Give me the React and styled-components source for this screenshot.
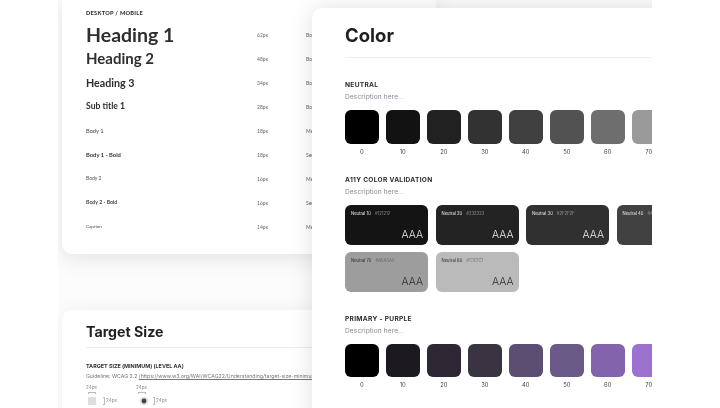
import React from "react";
import styled, { createGlobalStyle } from "styled-components";

const typeRows = [
  { name: "Heading 1", size: "62px", weight: "Bold", font: 19.5, w: 600, color: "#2e2e2e" },
  { name: "Heading 2", size: "48px", weight: "Bold", font: 15, w: 600, color: "#2e2e2e" },
  { name: "Heading 3", size: "34px", weight: "Bold", font: 10.7, w: 600, color: "#2e2e2e" },
  { name: "Sub title 1", size: "28px", weight: "Bold", font: 8.6, w: 600, color: "#2e2e2e" },
  { name: "Body 1", size: "18px", weight: "Medium", font: 5.7, w: 400, color: "#444" },
  { name: "Body 1 - Bold", size: "18px", weight: "Semibold", font: 5.8, w: 600, color: "#333" },
  { name: "Body 2", size: "16px", weight: "Medium", font: 5, w: 400, color: "#555" },
  { name: "Body 2 - Bold", size: "16px", weight: "Semibold", font: 5.2, w: 600, color: "#444" },
  { name: "Caption", size: "14px", weight: "Medium", font: 4.6, w: 400, color: "#555" },
];

const neutral = ["#000000", "#121212", "#212121", "#323232", "#404040", "#525252", "#6e6e6e", "#9a9a9a"];
const purple = ["#000000", "#1c1a20", "#2c2733", "#3a3342", "#5c4d72", "#6a5a88", "#8363ac", "#9b72d0"];
const steps = [0, 10, 20, 30, 40, 50, 60, 70];

const validation = [
  { name: "Neutral 10", hex: "#121212", bg: "#141414", light: true },
  { name: "Neutral 20", hex: "#232323", bg: "#232323", light: true },
  { name: "Neutral 30", hex: "#2F2F2F", bg: "#303030", light: true },
  { name: "Neutral 40", hex: "#404040", bg: "#414141", light: true },
  { name: "Neutral 70", hex: "#A5A5A5", bg: "#9d9d9d", light: false },
  { name: "Neutral 80", hex: "#C1C1C1", bg: "#bababa", light: false },
];

const App = () => {
  return (
    <Canvas>
      <GlobalStyle />
      <LeftColumn>
        <TypeCard>
          <TinyLabel>DESKTOP / MOBILE</TinyLabel>
          {typeRows.map((r) => (
            <TypeRow key={r.name}>
              <TypeName $size={r.font} $weight={r.w} $color={r.color}>{r.name}</TypeName>
              <TypeMeta>{r.size}</TypeMeta>
              <TypeMeta>{r.weight}</TypeMeta>
            </TypeRow>
          ))}
        </TypeCard>
        <TargetCard>
          <TargetTitle>Target Size</TargetTitle>
          <TargetHeading>TARGET SIZE (MINIMUM) (LEVEL AA)</TargetHeading>
          <Guideline>
            Guideline: WCAG 2.2 <u>(https://www.w3.org/WAI/WCAG22/Understanding/target-size-minimum.html)</u>
          </Guideline>
          <TargetDemos>
            <TargetDemo>
              <DimLabel>24px</DimLabel>
              <DimBar />
              <DemoRow $inset={2} $gap={6}>
                <GraySquare />
                <DimSide />
                <DimLabel>24px</DimLabel>
              </DemoRow>
            </TargetDemo>
            <TargetDemo>
              <DimLabel>24px</DimLabel>
              <DimBar />
              <DemoRow $inset={4} $gap={4}>
                <TargetDot width="8" height="8" viewBox="0 0 8 8">
                  <circle cx="4" cy="4" r="4" fill="#dcdcdc" />
                  <circle cx="4" cy="4" r="2.4" fill="#444" />
                </TargetDot>
                <DimSide />
                <DimLabel>24px</DimLabel>
              </DemoRow>
            </TargetDemo>
          </TargetDemos>
        </TargetCard>
      </LeftColumn>

      <ColorCard>
        <ColorTitle>Color</ColorTitle>

        <SectionTitle>NEUTRAL</SectionTitle>
        <Description>Description here...</Description>
        <SwatchRow>
          {neutral.map((c, i) => (
            <SwatchItem key={c}>
              <Swatch $bg={c} />
              <SwatchLabel>{steps[i]}</SwatchLabel>
            </SwatchItem>
          ))}
        </SwatchRow>

        <SectionTitle>A11Y COLOR VALIDATION</SectionTitle>
        <Description>Description here...</Description>
        <ValidationGrid>
          {validation.map((v) => (
            <ValidationCard key={v.name} $bg={v.bg} $light={v.light}>
              <ValidationHead>
                <span>{v.name}</span>
                <ValidationHex>{v.hex}</ValidationHex>
              </ValidationHead>
              <Score>AAA</Score>
            </ValidationCard>
          ))}
        </ValidationGrid>

        <SectionTitle>PRIMARY - PURPLE</SectionTitle>
        <Description>Description here...</Description>
        <SwatchRow>
          {purple.map((c, i) => (
            <SwatchItem key={c}>
              <Swatch $bg={c} />
              <SwatchLabel>{steps[i]}</SwatchLabel>
            </SwatchItem>
          ))}
        </SwatchRow>
      </ColorCard>
    </Canvas>
  );
};

const GlobalStyle = createGlobalStyle`
  html, body {
    margin: 0;
    background: #fff;
    overflow: hidden;
  }
`;

const Canvas = styled.div`
  position: relative;
  width: 594px;
  height: 408px;
  margin-left: 58px;
  overflow: hidden;
  background: #fcfcfc;
  font-family: Inter, sans-serif;
  filter: blur(0.3px);
`;

const LeftColumn = styled.div`
  display: flex;
  flex-direction: column;
  width: 374px;
  margin-left: 4px;
  gap: 56px;
`;

const TypeCard = styled.div`
  background: #fff;
  border-radius: 0 0 10px 10px;
  padding: 9px 0 15px 24px;
  box-shadow: 0 4px 22px rgba(0, 0, 0, 0.1);
`;

const TinyLabel = styled.div`
  font-family: Lato, sans-serif;
  font-size: 5.6px;
  font-weight: 900;
  line-height: 8px;
  letter-spacing: 0.3px;
  color: #333;
  margin-bottom: 6px;
`;

const TypeRow = styled.div`
  display: grid;
  grid-template-columns: 171px 49px 1fr;
  align-items: center;
  height: 24px;
`;

const TypeName = styled.div`
  padding-bottom: 1.5px;
  font-family: Lato, sans-serif;
  font-size: ${(p) => p.$size}px;
  font-weight: ${(p) => (p.$weight > 500 ? 700 : 400)};
  color: ${(p) => p.$color};
  white-space: nowrap;
`;

const TypeMeta = styled.div`
  font-family: Lato, sans-serif;
  font-size: 5px;
  color: #666;
`;

const TargetCard = styled.div`
  background: #fff;
  border-radius: 10px 10px 0 0;
  padding: 0 0 0 24px;
  height: 120px;
  box-shadow: 0 0 18px rgba(0, 0, 0, 0.05);
`;

const TargetTitle = styled.h2`
  margin: 0;
  padding-top: 6px;
  font-size: 14.2px;
  font-weight: 700;
  line-height: 31px;
  height: 31px;
  color: #1f2024;
  border-bottom: 1px solid #eeeeee;
`;

const TargetHeading = styled.div`
  margin-top: 14px;
  font-size: 5.4px;
  font-weight: 700;
  line-height: 8px;
  color: #333;
  white-space: nowrap;
`;

const Guideline = styled.div`
  margin-top: 2px;
  font-size: 5.2px;
  line-height: 8px;
  color: #777;
  white-space: nowrap;
`;

const TargetDemos = styled.div`
  display: flex;
  gap: 36px;
  margin-top: 5px;
`;

const TargetDemo = styled.div`
  display: flex;
  flex-direction: column;
  width: 14px;
`;

const DimLabel = styled.div`
  font-size: 4.6px;
  line-height: 6px;
  color: #888;
  white-space: nowrap;
`;

const DimBar = styled.div`
  width: 8px;
  height: 2px;
  margin: 1px 0 3px 2px;
  border: 1px solid #bbb;
  border-bottom: 0;
  box-sizing: border-box;
`;

const DemoRow = styled.div`
  display: flex;
  align-items: center;
  gap: 1px;
  margin-left: ${(p) => p.$inset}px;

  > :nth-child(2) {
    margin-left: ${(p) => p.$gap}px;
  }
`;

const GraySquare = styled.div`
  flex: none;
  width: 8px;
  height: 8px;
  background: #dedede;
`;

const TargetDot = styled.svg`
  flex: none;
`;

const DimSide = styled.div`
  flex: none;
  width: 2px;
  height: 8px;
  border: 1px solid #bbb;
  border-left: 0;
  box-sizing: border-box;
`;

const ColorCard = styled.div`
  position: absolute;
  left: 254px;
  top: 8px;
  width: 400px;
  height: 420px;
  box-sizing: border-box;
  padding-left: 33px;
  background: #fff;
  border-radius: 10px 0 0 0;
  box-shadow: 0 0 24px rgba(0, 0, 0, 0.12);
`;

const ColorTitle = styled.h2`
  margin: 0 0 22px;
  padding-top: 6px;
  font-size: 18.5px;
  font-weight: 700;
  line-height: 43px;
  height: 43px;
  color: #1f2024;
  border-bottom: 1px solid #f0f0f0;
`;

const SectionTitle = styled.div`
  font-size: 6.6px;
  font-weight: 700;
  line-height: 10px;
  letter-spacing: 0.3px;
  color: #2b2c30;
`;

const Description = styled.div`
  margin-top: 2px;
  font-size: 6.6px;
  line-height: 10px;
  letter-spacing: 0.1px;
  color: #85878c;
`;

const SwatchRow = styled.div`
  display: flex;
  gap: 7.4px;
  margin: 8px 0 20px;
`;

const SwatchItem = styled.div`
  flex: none;
  width: 33.6px;
`;

const Swatch = styled.div`
  height: 33.6px;
  border-radius: 6px;
  background: ${(p) => p.$bg};
`;

const SwatchLabel = styled.div`
  margin-top: 4px;
  font-size: 5.8px;
  line-height: 7px;
  text-align: center;
  color: #444;
`;

const ValidationGrid = styled.div`
  display: grid;
  grid-template-columns: repeat(4, 83px);
  gap: 7px 7.5px;
  margin: 8px 0 22px;
`;

const ValidationCard = styled.div`
  height: 40px;
  box-sizing: border-box;
  padding: 5px 5px 4px 6px;
  border-radius: 6px;
  display: flex;
  flex-direction: column;
  justify-content: space-between;
  background: ${(p) => p.$bg};
  color: ${(p) => (p.$light ? "#e8e8e8" : "#2c2c2c")};
`;

const ValidationHead = styled.div`
  display: flex;
  gap: 4px;
  font-size: 4.2px;
  line-height: 8px;
  white-space: nowrap;
`;

const ValidationHex = styled.span`
  opacity: 0.5;
`;

const Score = styled.div`
  font-size: 10.5px;
  line-height: 12px;
  text-align: right;
  font-weight: 300;
`;

export default App;
